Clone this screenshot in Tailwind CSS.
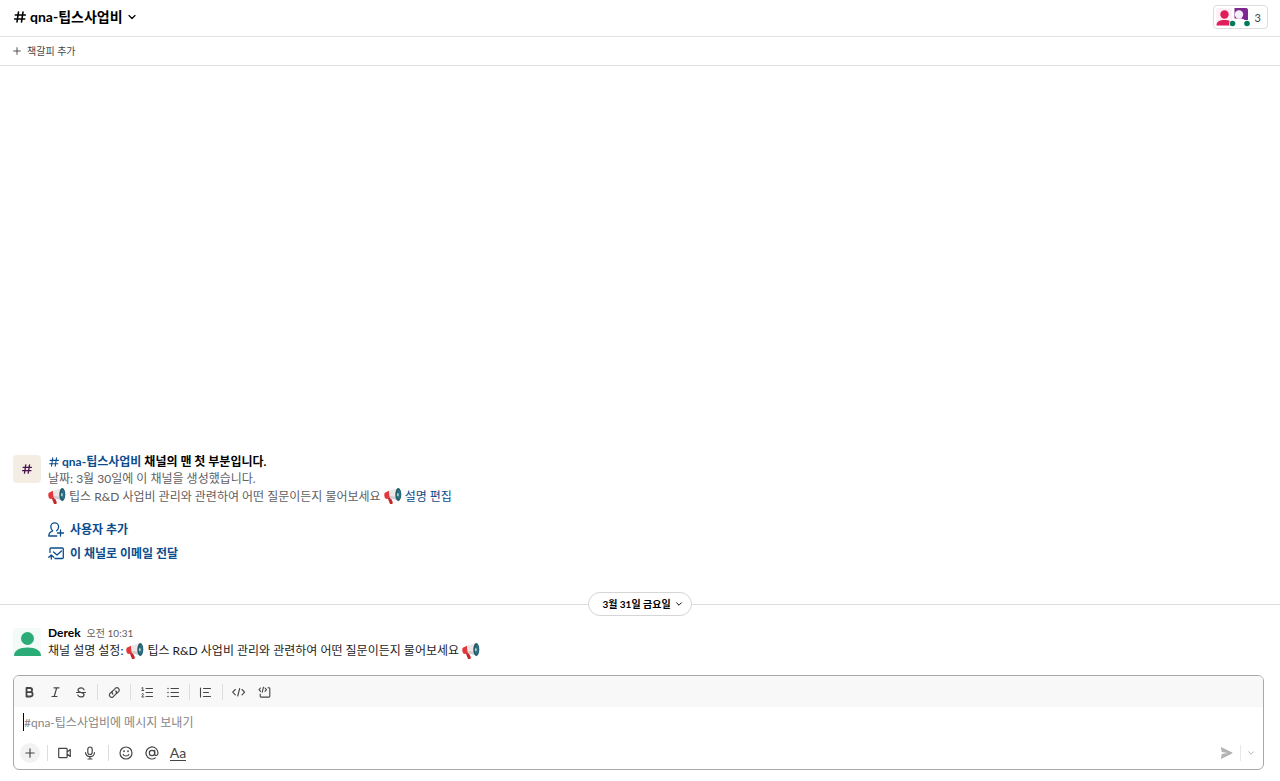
<!DOCTYPE html>
<html lang="ko">
<head>
    <meta charset="UTF-8">
    <title>qna-팁스사업비</title>
    <meta name="viewport" content="width=device-width, initial-scale=1.0">
    <script src="https://cdn.jsdelivr.net/npm/@tailwindcss/browser@4"></script>
</head>
<body class="h-screen flex flex-col overflow-hidden bg-white text-[#1d1c1d] text-[12px] leading-[17px] font-['Lato','Noto_Sans_CJK_KR',sans-serif]">

    <!-- Shared icons -->
    <svg class="hidden">
        <symbol id="megaphone" viewBox="0 0 18 18">
            <path d="M3.500 10.500 6.500 10l2.300 5.500c.2 1.600-2.400 2-3 .9z" fill="#c5252b"/>
            <path d="M.8 5.700 5 3.800 6 11.300l-3.700.8C.3 11.300-.3 7.300.8 5.700z" fill="#e0383c"/>
            <path d="M5 3.800 13.500 1.200l1.300 12.300L6 11.300z" fill="#ece7e4"/>
            <path d="M5.700 9l8.600 1.100.5 3.400L6 11.300z" fill="#cfcbca"/>
            <ellipse cx="14.300" cy="7.500" rx="3" ry="6.500" fill="#1f5a6b"/>
            <ellipse cx="14.900" cy="7.500" rx="1.700" ry="4.800" fill="#2d7184"/>
            <ellipse cx="13.800" cy="7.700" rx="1" ry="1.800" fill="#b9c7cc"/>
        </symbol>
        <symbol id="chevron" viewBox="0 0 10 10">
            <path d="M2 3.500 5 6.500 8 3.500" fill="none" stroke="currentColor" stroke-width="1.200" stroke-linecap="round" stroke-linejoin="round"/>
        </symbol>
        <symbol id="hash" viewBox="0 0 12 12">
            <path d="M4.500 1 3 11M9 1 7.500 11M1.300 4h10M.7 8h10" fill="none" stroke="currentColor" stroke-linecap="round"/>
        </symbol>
        <symbol id="plus" viewBox="0 0 12 12">
            <path d="M6 1v10M1 6h10" fill="none" stroke="currentColor" stroke-width="1.400" stroke-linecap="round"/>
        </symbol>
    </svg>

    <header class="flex items-center justify-between h-[37px] shrink-0 pl-3.5 pr-3 pb-0.5 border-b border-[#e2e2e2]">
        <h1>
            <button type="button" class="flex items-center gap-1 text-[14px] leading-5 font-bold text-black">
                <svg class="size-3 stroke-[1.6]"><use href="#hash"/></svg>
                qna-팁스사업비
                <svg class="size-2.5"><use href="#chevron"/></svg>
            </button>
        </h1>
        <button type="button" aria-label="멤버 3명 보기" class="flex items-center h-6 px-0.5 pr-1.5 border border-[#dddddd] rounded text-[11px] text-[#454447]">
            <svg class="w-[34px] h-5" viewBox="0 0 34 20">
                <rect width="16" height="18" y="1" rx="2" fill="#fdf1f5"/>
                <circle cx="8.500" cy="7.500" r="4.200" fill="#e01e5a"/>
                <path d="M.5 18.500c0-4 3-5.500 8-5.500s6 1 6.500 3v2.500z" fill="#e01e5a"/>
                <path d="M18.500 1h11.500a2 2 0 0 1 2 2v10h-3.500c-1-1-2-1.300-3-1.500h-7z" fill="#7c2890"/>
                <circle cx="23" cy="7.500" r="4.200" fill="#f8edfa"/>
                <circle cx="16.500" cy="16.500" r="3.500" fill="#fff"/>
                <circle cx="16.500" cy="16.500" r="2.800" fill="#007a5a"/>
                <circle cx="31" cy="16.500" r="3.500" fill="#fff"/>
                <circle cx="31" cy="16.500" r="2.800" fill="#007a5a"/>
            </svg>
            <span class="ml-[5px]">3</span>
        </button>
    </header>

    <div class="flex items-center h-[29px] shrink-0 px-[13px] border-b border-[#e2e2e2]">
        <button type="button" class="flex items-center gap-1.5 text-[10px] leading-4 text-[#454447]">
            <svg class="size-2"><use href="#plus"/></svg>
            책갈피 추가
        </button>
    </div>

    <main class="flex-1 min-h-0 flex flex-col justify-end">
        <!-- Channel intro -->
        <section class="flex gap-[7px] px-[13px]">
            <div class="flex items-center justify-center size-7 mt-0.5 shrink-0 rounded-sm bg-[#f4ede4] text-[#4a154b]">
                <svg class="size-2.5 stroke-[1.6]"><use href="#hash"/></svg>
            </div>
            <div class="text-[#616061]">
                <h2 class="flex items-center font-bold text-black">
                    <a href="#" class="flex items-center text-[#0b4c8c]">
                        <svg class="size-2.5 ml-px mr-[3px] stroke-[1.3]"><use href="#hash"/></svg>
                        qna-팁스사업비
                    </a>
                    <span class="ml-[3px]">채널의 맨 첫 부분입니다.</span>
                </h2>
                <p>날짜: 3월 30일에 이 채널을 생성했습니다.</p>
                <p class="flex items-center">
                    <svg class="size-[18px] mr-[3px]"><use href="#megaphone"/></svg>
                    팁스 R&amp;D 사업비 관리와 관련하여 어떤 질문이든지 물어보세요
                    <svg class="size-[18px] mx-[3px]"><use href="#megaphone"/></svg>
                    <a href="#" class="text-[#0b4c8c]">설명 편집</a>
                </p>
                <div class="mt-[13px] flex flex-col items-start leading-6 font-bold text-[#0b4c8c]">
                    <button type="button" class="flex items-center gap-1.5">
                        <svg class="size-4" viewBox="0 0 16 16" fill="none" stroke="currentColor" stroke-width="1.300" stroke-linecap="round" stroke-linejoin="round">
                            <path d="M4.700 8.800C3.200 7.700 2.800 6.300 2.800 4.800a3.900 3.900 0 0 1 7.800 0c0 1.500-.5 2.900-1.900 4M4.700 8.800C2.500 9.500.8 10.800.8 14h8M12.500 8v6M9.500 11h6"/>
                        </svg>
                        사용자 추가
                    </button>
                    <button type="button" class="flex items-center gap-1.5">
                        <svg class="size-4" viewBox="0 0 16 16" fill="none" stroke="currentColor" stroke-width="1.300" stroke-linecap="round" stroke-linejoin="round">
                            <path d="M2 6.500V3a1 1 0 0 1 1-1h11.300a1 1 0 0 1 1 1v8.500a1 1 0 0 1-1 1H7M5.500 6 9 9l4.500-4M3.300 13V9.200M.8 11.200l2.500-2.200 2.500 2.200"/>
                        </svg>
                        이 채널로 이메일 전달
                    </button>
                </div>
            </div>
        </section>

        <!-- Date divider -->
        <div class="flex items-center mt-[26px] mr-1 before:flex-1 before:h-px before:bg-[#dddddd] after:flex-1 after:h-px after:-mr-1 after:bg-[#dddddd]">
            <button type="button" class="flex items-center h-6 pl-[13px] pr-2 gap-1 border border-[#d5d5d5] rounded-full text-[10px] font-bold text-black">
                3월 31일 금요일
                <svg class="size-2"><use href="#chevron"/></svg>
            </button>
        </div>

        <!-- Message -->
        <article class="flex gap-[7px] px-[13px] mt-2">
            <svg class="size-7 mt-1 shrink-0" viewBox="0 0 28 28">
                <rect width="28" height="28" rx="3" fill="#f2fbf8"/>
                <circle cx="14.500" cy="10.500" r="6.500" fill="#2bac76"/>
                <path d="M1 28c0-5.500 5-8.500 13.500-8.500S28 22.500 28 28z" fill="#2bac76"/>
            </svg>
            <div>
                <div class="flex items-baseline gap-1.5">
                    <a href="#" class="font-bold text-black">Derek</a>
                    <time class="text-[10px] text-[#616061]">오전 10:31</time>
                </div>
                <p class="flex items-center h-[17px]">
                    채널 설명 설정:
                    <svg class="size-[18px] mx-[3px]"><use href="#megaphone"/></svg>
                    팁스 R&amp;D 사업비 관리와 관련하여 어떤 질문이든지 물어보세요
                    <svg class="size-[18px] ml-[3px]"><use href="#megaphone"/></svg>
                </p>
            </div>
        </article>
    </main>

    <form class="mt-4 mb-[11px] ml-[13px] mr-4 shrink-0 border border-[#a8a8a8] rounded-md overflow-hidden text-[#454447]">
        <div class="flex items-center gap-0.5 h-[31px] pl-[3px] bg-[#f8f8f8]">
            <button type="button" aria-label="굵게" class="size-6 grid place-items-center">
                <svg class="size-4" viewBox="0 0 16 16" fill="none" stroke="currentColor" stroke-width="1.800" stroke-linejoin="round"><path d="M5.500 4H9a2 2 0 0 1 0 4.200H5.500zM5.500 8.200h4a2.100 2.100 0 0 1 0 4.300h-4z"/></svg>
            </button>
            <button type="button" aria-label="기울임꼴" class="size-6 grid place-items-center">
                <svg class="size-4" viewBox="0 0 16 16" fill="none" stroke="currentColor" stroke-width="1.200" stroke-linecap="round"><path d="M7 3.800h5M5 12.500h5M9.700 3.800l-2.500 8.700"/></svg>
            </button>
            <button type="button" aria-label="취소선" class="size-6 grid place-items-center">
                <svg class="size-4" viewBox="0 0 16 16" fill="none" stroke="currentColor" stroke-width="1.200" stroke-linecap="round"><path d="M3.500 8.500h9M11 5.700C10.500 4.500 9.500 3.900 8 3.900c-1.700 0-3 .9-3 2.200 0 1.400 1.200 1.900 3 2.400 1.800.4 3 1 3 2.200s-1.300 2.200-3 2.200c-1.600 0-2.700-.7-3.200-1.900"/></svg>
            </button>
            <span class="w-px h-4 mx-0.5 bg-[#dddddd]"></span>
            <button type="button" aria-label="링크" class="size-6 grid place-items-center">
                <svg class="size-4" viewBox="0 0 16 16" fill="none" stroke="currentColor" stroke-width="1.200" stroke-linecap="round"><path d="M6.800 10a2.300 2.300 0 0 1 0-3.200l2.800-2.700a2.300 2.300 0 0 1 3.200 3.200l-2 2M9.800 7a2.300 2.300 0 0 1 0 3.200L7 12.900a2.300 2.300 0 0 1-3.200-3.200l2-2"/></svg>
            </button>
            <span class="w-px h-4 mx-0.5 bg-[#dddddd]"></span>
            <button type="button" aria-label="번호 매기기 목록" class="size-6 grid place-items-center">
                <svg class="size-4" viewBox="0 0 16 16" fill="none" stroke="currentColor" stroke-linecap="round"><path d="M7 4.500h6.500M7 8.500h6.500M7 12.500h6.500"/><path stroke-width=".9" d="M2.800 4 3.800 3.500v3M2.800 6.500h2M2.800 10c.5-.8 1.800-.5 1.600.3L2.800 13h2"/></svg>
            </button>
            <button type="button" aria-label="글머리 기호 목록" class="size-6 grid place-items-center">
                <svg class="size-4" viewBox="0 0 16 16" fill="none" stroke="currentColor" stroke-linecap="round"><path d="M6 4.500h7.500M6 8.500h7.500M6 12.500h7.500"/><path stroke-width="1.500" d="M3 4.500h.01M3 8.500h.01M3 12.500h.01"/></svg>
            </button>
            <span class="w-px h-4 mx-0.5 bg-[#dddddd]"></span>
            <button type="button" aria-label="인용구" class="size-6 grid place-items-center">
                <svg class="size-4" viewBox="0 0 16 16" fill="none" stroke="currentColor" stroke-width="1.100" stroke-linecap="round"><path d="M2.500 4v9M5.500 4.500h7M5.500 8.500h5M5.500 12.500h7"/></svg>
            </button>
            <span class="w-px h-4 mx-0.5 bg-[#dddddd]"></span>
            <button type="button" aria-label="코드" class="size-6 grid place-items-center">
                <svg class="size-4" viewBox="0 0 16 16" fill="none" stroke="currentColor" stroke-width="1.100" stroke-linecap="round" stroke-linejoin="round"><path d="M4.300 5.500 1.700 8.200l2.600 2.700M11 5.500l2.600 2.700L11 10.900M8.700 4.500l-2 7.500"/></svg>
            </button>
            <button type="button" aria-label="코드 블록" class="size-6 grid place-items-center">
                <svg class="size-4" viewBox="0 0 16 16" fill="none" stroke="currentColor" stroke-width="1.100" stroke-linecap="round" stroke-linejoin="round"><path d="M3.500 4 2 5.700l1.500 1.700M8 4l1.500 1.700L8 7.400M6.500 3.200l-1.300 5M11 3.700h1a.8.8 0 0 1 .8.800v7.800a.8.8 0 0 1-.8.800H4a.8.8 0 0 1-.8-.800V10"/></svg>
            </button>
        </div>
        <label class="flex items-center h-[30px] pl-[9px]">
            <span class="w-px h-[18px] bg-black"></span>
            <input type="text" aria-label="메시지" placeholder="#qna-팁스사업비에 메시지 보내기" class="flex-1 min-w-0 outline-none placeholder:text-[#868686]">
        </label>
        <div class="flex items-center gap-0.5 h-8 pl-1 pr-1">
            <button type="button" aria-label="첨부" class="size-6 grid place-items-center">
                <span class="size-5 grid place-items-center rounded-full bg-[#f2f2f2]"><svg class="size-2.5"><use href="#plus"/></svg></span>
            </button>
            <span class="w-px h-4 mx-[3px] bg-[#dddddd]"></span>
            <button type="button" aria-label="비디오 클립 녹화" class="size-6 grid place-items-center">
                <svg class="size-4" viewBox="0 0 16 16" fill="none" stroke="currentColor" stroke-width="1.200" stroke-linejoin="round"><path d="M1.700 3.300h7.600a.8.8 0 0 1 .8.800v7.800a.8.8 0 0 1-.8.800H2.500a.8.8 0 0 1-.8-.8zM10.100 7l3.200-2.500v7L10.100 9"/></svg>
            </button>
            <button type="button" aria-label="오디오 클립 녹음" class="size-6 grid place-items-center">
                <svg class="size-4" viewBox="0 0 16 16" fill="none" stroke="currentColor" stroke-width="1.200" stroke-linecap="round"><rect x="4.800" y="2" width="4.400" height="7.500" rx="2.200"/><path d="M2.500 7.500a4.500 4.200 0 0 0 9 0M7 11.700V14M5 14h4"/></svg>
            </button>
            <span class="w-px h-4 mx-[3px] bg-[#dddddd]"></span>
            <button type="button" aria-label="이모티콘" class="size-6 grid place-items-center">
                <svg class="size-4" viewBox="0 0 16 16" fill="none" stroke="currentColor" stroke-width="1.200" stroke-linecap="round"><circle cx="8" cy="8" r="6"/><path d="M5.200 9.500c1 2 4.600 2 5.600 0"/><path stroke-width="1.700" d="M6 6v.3M10 6v.3"/></svg>
            </button>
            <button type="button" aria-label="멘션" class="size-6 grid place-items-center">
                <svg class="size-4" viewBox="0 0 16 16" fill="none" stroke="currentColor" stroke-width="1.200" stroke-linecap="round"><circle cx="8" cy="8" r="2.700"/><path d="M10.700 5.300V9c0 2.300 3.300 2 3.300-1a6 6 0 1 0-2.700 5"/></svg>
            </button>
            <button type="button" aria-label="서식 숨기기" class="size-6 grid place-items-center">
                <span class="border-b border-[#454447] text-[14px] leading-[15px]">Aa</span>
            </button>
            <button type="submit" aria-label="보내기" class="size-6 ml-auto grid place-items-center text-[#b3b3b3]">
                <svg class="size-4" viewBox="0 0 16 16" fill="currentColor"><path d="M3 2.700c-.3-.5 0-.7.500-.5l10.700 5.300c.5.300.5.700 0 1L3.500 13.800c-.5.200-.8 0-.5-.5L3.700 9l5.800-1-5.800-1z"/></svg>
            </button>
            <span class="w-px h-4 bg-[#e8e8e8]"></span>
            <button type="button" aria-label="메시지 예약" class="w-4 h-6 grid place-items-center text-[#b3b3b3]">
                <svg class="size-2"><use href="#chevron"/></svg>
            </button>
        </div>
    </form>
</body>
</html>
